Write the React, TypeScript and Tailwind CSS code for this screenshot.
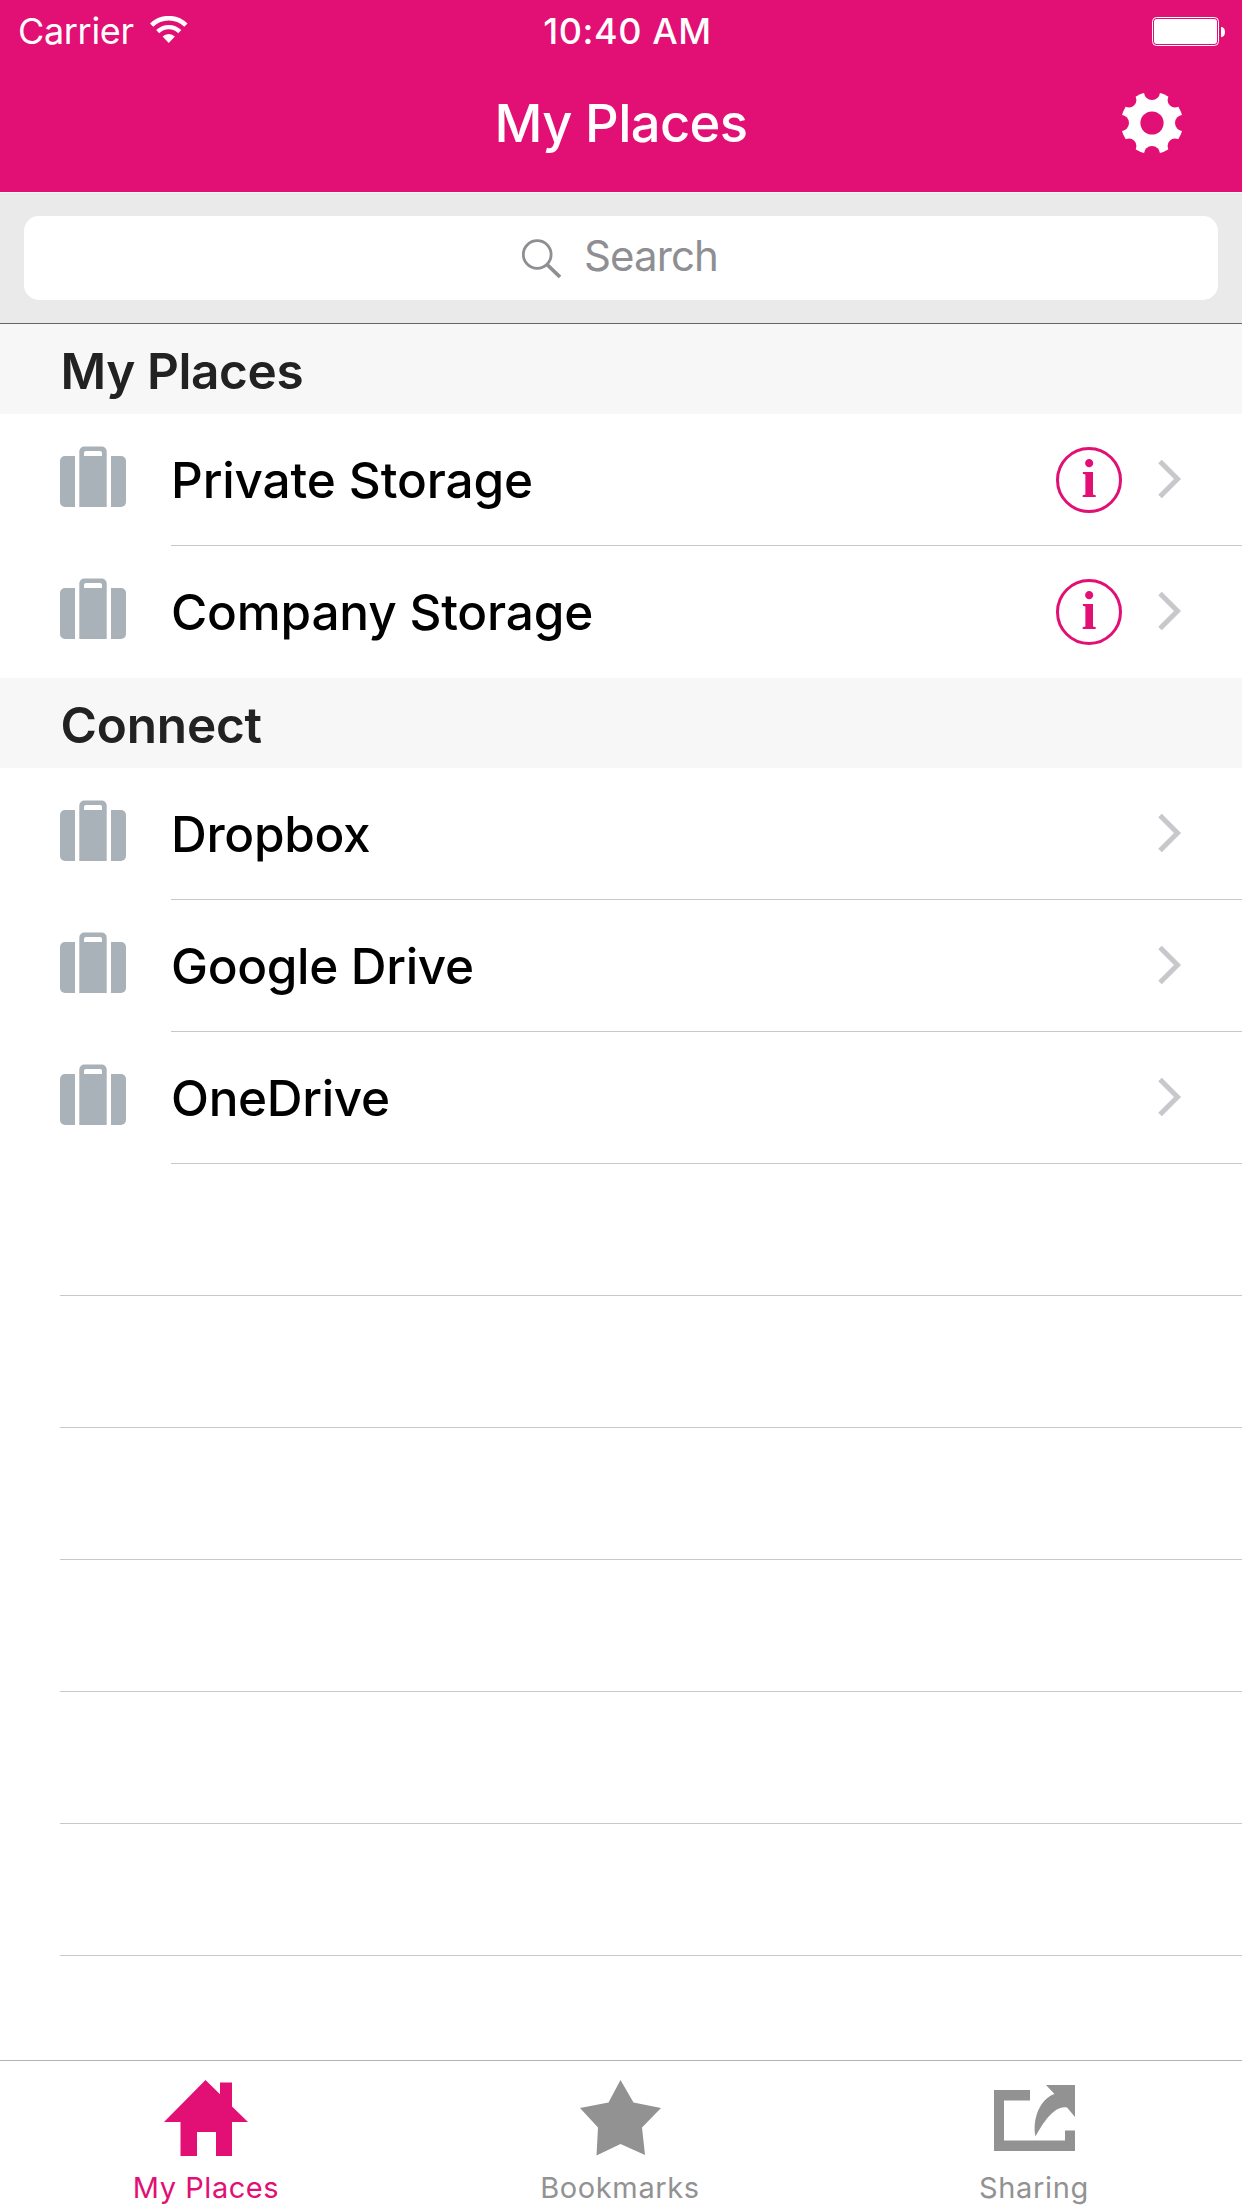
import React, { useState } from 'react';

interface Place {
  id: number;
  name: string;
  tracking: string;
  hasInfo?: boolean;
}

interface Section {
  title: string;
  tracking: string;
  places: Place[];
}

const sections: Section[] = [
  {
    title: 'My Places',
    tracking: 'tracking-[-0.4px]',
    places: [
      { id: 1, name: 'Private Storage', tracking: 'tracking-[-0.13px]', hasInfo: true },
      { id: 2, name: 'Company Storage', tracking: 'tracking-[-0.2px]', hasInfo: true },
    ],
  },
  {
    title: 'Connect',
    tracking: 'tracking-[-0.2px]',
    places: [
      { id: 3, name: 'Dropbox', tracking: 'tracking-[-0.3px]' },
      { id: 4, name: 'Google Drive', tracking: 'tracking-[-0.34px]' },
      { id: 5, name: 'OneDrive', tracking: 'tracking-[-0.32px]' },
    ],
  },
];

const EMPTY_ROWS = 6;

function WifiIcon() {
  return (
    <svg width="38" height="28" viewBox="0 0 38 28" fill="none" stroke="currentColor">
      <path d="M1.6 9.2a24.4 24.4 0 0 1 34.3 0" strokeWidth="4.6" />
      <path d="M7.7 15.6a15.8 15.8 0 0 1 22.1 0" strokeWidth="4.4" />
      <path d="M12.6 20.6a8.8 8.8 0 0 1 12.3 0L18.75 27z" fill="currentColor" stroke="none" />
    </svg>
  );
}

function BatteryIcon() {
  return (
    <svg width="73" height="29" viewBox="0 0 73 29" fill="currentColor">
      <rect x="0.5" y="0.5" width="66" height="28" rx="4" fill="none" stroke="currentColor" />
      <rect x="2" y="2" width="63" height="25" rx="3" />
      <path d="M69 10c2.600 0 4 2 4 5s-1.400 5-4 5z" />
    </svg>
  );
}

function GearIcon() {
  return (
    <svg width="60" height="60" viewBox="0 0 60 60">
      <mask id="gear">
        <circle cx="30" cy="30" r="31" fill="white" />
        <circle cx="30" cy="30" r="11.600" fill="black" />
        {[0, 90, 180, 270].map((angle) => (
          <circle key={angle} cx="30" cy="-1" r="8" fill="black" transform={`rotate(${angle} 30 30)`} />
        ))}
        {[45, 135, 225, 315].map((angle) => (
          <circle key={angle} cx="30" cy="-2.500" r="7.400" fill="black" transform={`rotate(${angle} 30 30)`} />
        ))}
      </mask>
      <rect width="60" height="60" fill="currentColor" mask="url(#gear)" />
    </svg>
  );
}

function SearchIcon() {
  return (
    <svg width="40" height="40" viewBox="0 0 40 40" fill="none" stroke="currentColor">
      <circle cx="15.200" cy="15.500" r="13.900" strokeWidth="2.800" />
      <path d="M25 25.500l13 12.500" strokeWidth="3.800" />
    </svg>
  );
}

function SuitcaseIcon() {
  return (
    <svg width="66" height="61" viewBox="0 0 66 61" fill="#a9b1b9">
      <path d="M15 10H5a5 5 0 0 0-5 5v41a5 5 0 0 0 5 5h10z" />
      <path d="M51 10h10a5 5 0 0 1 5 5v41a5 5 0 0 1-5 5H51z" />
      <path
        fillRule="evenodd"
        d="M19.300 61V5.500a5 5 0 0 1 5-5h17.400a5 5 0 0 1 5 5V61zM24 10h18V7a2 2 0 0 0-2-2H26a2 2 0 0 0-2 2z"
      />
    </svg>
  );
}

function Chevron() {
  return (
    <svg width="24" height="40" viewBox="0 0 24 40" fill="none" stroke="#c7c7cc" strokeWidth="5">
      <path d="M2 2.500L19.500 20L2 37.500" />
    </svg>
  );
}

function HomeIcon() {
  return (
    <svg width="84" height="76" viewBox="0 0 84 76" fill="currentColor">
      <path d="M41.500 0L56 14.300V2.500h12v24L84 42H68v34H52V52H33v24H16.500V42H0z" />
    </svg>
  );
}

function StarIcon() {
  return (
    <svg width="81" height="76" viewBox="0 0 81 76" fill="currentColor">
      <path d="M40.500 0L53.500 22.500L81 28L62 47.500L65 75L40.500 64L16.500 75.500L18 47.500L0 28L28.500 22.500z" />
    </svg>
  );
}

function ShareIcon() {
  return (
    <svg width="81" height="66" viewBox="0 0 81 66" fill="currentColor">
      <path d="M36 5v10.500H10V55.500H71V45.500H81V66H0V5z" />
      <path d="M52 0H81V32L73 22.500C61 20 50 36 41.500 51.500C38 34 46 14 60.500 9z" />
    </svg>
  );
}

function PlaceRow({ place, inset }: { place: Place; inset: boolean }) {
  return (
    <li className="flex h-[132px] pl-[60px]">
      <div className="w-[111px] shrink-0 pt-8">
        <SuitcaseIcon />
      </div>
      <div
        className={`flex flex-1 items-center border-b pr-[60px] ${
          inset ? 'border-[#c8c7cc]' : 'border-transparent'
        }`}
      >
        <span className={`flex-1 pt-[3px] whitespace-nowrap text-[49.5px] leading-none font-medium ${place.tracking}`}>
          {place.name}
        </span>
        {place.hasInfo && (
          <button className="mr-9 flex size-[66px] items-center justify-center rounded-full border-3 border-[#e20f75] pb-px font-['Liberation_Serif',serif] text-[54px] leading-none font-bold text-[#e20f75]">
            i
          </button>
        )}
        <div className="pb-px">
          <Chevron />
        </div>
      </div>
    </li>
  );
}

const tabs = [
  { name: 'My Places', icon: HomeIcon, tracking: 'tracking-[0.55px]', pad: 'pt-[19px]' },
  { name: 'Bookmarks', icon: StarIcon, tracking: 'tracking-[0.61px]', pad: 'pt-[19px]' },
  { name: 'Sharing', icon: ShareIcon, tracking: 'tracking-[0.66px]', pad: 'pt-6' },
];

export default function App() {
  const [activeTab, setActiveTab] = useState('My Places');

  return (
    <div className="flex h-[2208px] w-[1242px] flex-col overflow-hidden bg-white font-['Inter',sans-serif] text-black">
      <header className="h-[192px] bg-[#e20f75] text-white">
        <div className="grid h-[60px] grid-cols-3 items-center pt-0.5 pr-[17px] pl-[18px] text-[36px] leading-none">
          <div className="flex items-center">
            <span className="w-[132px] tracking-[-0.34px]">Carrier</span>
            <div className="-mt-0.5">
              <WifiIcon />
            </div>
          </div>
          <span className="pl-3 text-center font-medium tracking-[0.56px]">10:40 AM</span>
          <div className="flex justify-end">
            <BatteryIcon />
          </div>
        </div>
        <div className="grid h-[132px] grid-cols-[1fr_auto_1fr] items-center pr-[60px] pb-1.5 pl-[60px]">
          <span />
          <h1 className="text-[52.5px] leading-none font-medium tracking-[-0.64px]">My Places</h1>
          <button className="justify-self-end">
            <GearIcon />
          </button>
        </div>
      </header>

      <div className="h-[132px] border-t border-b border-t-[#f9f9f9] border-b-[#666666] bg-[#eaeaea] px-6 pt-[23px]">
        <div className="flex h-[84px] items-center justify-center rounded-[15px] bg-white pr-0.5 pb-[5px] text-[42px] leading-none text-[#8e8e93]">
          <div className="mr-[22px] pt-1.5">
            <SearchIcon />
          </div>
          <span className="tracking-[-0.91px]">Search</span>
        </div>
      </div>

      <main className="flex-1 overflow-hidden">
        {sections.map((section) => (
          <section key={section.title}>
            <h2
              className={`flex h-[90px] items-center bg-[#f7f7f7] pt-1.5 pl-[60.5px] text-[49.5px] leading-none font-semibold text-[#222222] ${section.tracking}`}
            >
              {section.title}
            </h2>
            <ul>
              {section.places.map((place) => (
                <PlaceRow key={place.id} place={place} inset={place.id !== 2} />
              ))}
            </ul>
          </section>
        ))}
        {Array.from({ length: EMPTY_ROWS }).map((_, i) => (
          <div key={i} className="ml-[60px] h-[132px] border-b border-[#c8c7cc]" />
        ))}
      </main>

      <nav className="grid h-[148px] grid-cols-3 border-t border-[#b2b2b2]">
        {tabs.map(({ name, icon: Icon, tracking, pad }) => (
          <button
            key={name}
            onClick={() => setActiveTab(name)}
            className={`flex flex-col items-center pr-0.5 ${activeTab === name ? 'text-[#e20f75]' : 'text-[#929292]'}`}
          >
            <div className={`h-[111px] shrink-0 ${pad}`}>
              <Icon />
            </div>
            <span className={`text-[29px] leading-8 ${tracking}`}>{name}</span>
          </button>
        ))}
      </nav>
    </div>
  );
}
